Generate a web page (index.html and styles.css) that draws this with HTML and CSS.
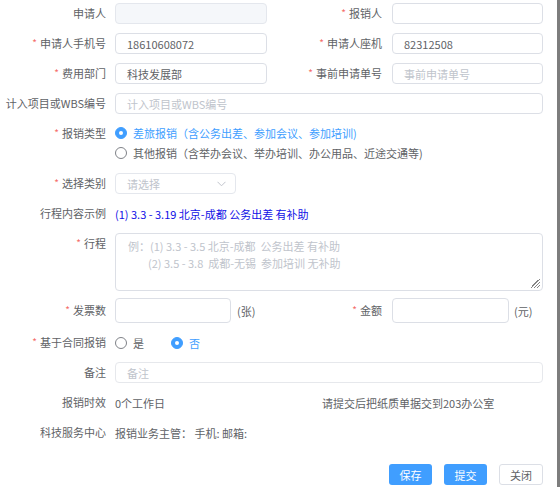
FILE: index.html
```html
<!DOCTYPE html>
<html lang="zh">
<head>
<meta charset="utf-8">
<link rel="stylesheet" href="styles.css">
</head>
<body>
<div class="page">
  <div class="form">
    <div class="row r1">
      <div class="item left"><div class="lbl">申请人</div><div class="inp disabled"></div></div>
      <div class="item right"><div class="lbl"><span class="star">*</span>报销人</div><div class="inp"></div></div>
    </div>
    <div class="row">
      <div class="item left"><div class="lbl"><span class="star">*</span>申请人手机号</div><div class="inp"><span class="val">18610608072</span></div></div>
      <div class="item right"><div class="lbl"><span class="star">*</span>申请人座机</div><div class="inp"><span class="val">82312508</span></div></div>
    </div>
    <div class="row">
      <div class="item left"><div class="lbl"><span class="star">*</span>费用部门</div><div class="inp"><span class="val">科技发展部</span></div></div>
      <div class="item right"><div class="lbl"><span class="star">*</span>事前申请单号</div><div class="inp"><span class="ph">事前申请单号</span></div></div>
    </div>
    <div class="row">
      <div class="item full"><div class="lbl">计入项目或WBS编号</div><div class="inp wide"><span class="ph">计入项目或WBS编号</span></div></div>
    </div>
    <div class="row r5">
      <div class="item full top"><div class="lbl l5"><span class="star">*</span>报销类型</div>
        <div class="radios">
          <div class="radio on"><span class="dot"></span><span>差旅报销（含公务出差、参加会议、参加培训)</span></div>
          <div class="radio"><span class="dot"></span><span>其他报销（含举办会议、举办培训、办公用品、近途交通等)</span></div>
        </div>
      </div>
    </div>
    <div class="row r6">
      <div class="item full"><div class="lbl"><span class="star">*</span>选择类别</div>
        <div class="inp select"><span class="ph">请选择</span>
          <svg class="chev" width="9" height="6" viewBox="0 0 9 6"><path d="M0.5 0.8 L4.5 4.8 L8.5 0.8" fill="none" stroke="#c0c4cc" stroke-width="1"/></svg>
        </div>
      </div>
    </div>
    <div class="row">
      <div class="item full"><div class="lbl">行程内容示例</div><div class="example">(1) 3.3 - 3.19 北京-成都 公务出差 有补助</div></div>
    </div>
    <div class="row r8">
      <div class="item full top"><div class="lbl l8"><span class="star">*</span>行程</div>
        <div class="inp area">
          <div class="ph">例：(1) 3.3 - 3.5 北京-成都&nbsp;&nbsp;公务出差 有补助</div>
          <div class="ph indent">(2) 3.5 - 3.8&nbsp;&nbsp;成都-无锡&nbsp;&nbsp;参加培训 无补助</div>
          <svg class="grip" width="12" height="12" viewBox="0 0 12 12">
            <path d="M11 2 L2 11 M11 5 L5 11 M11 8 L8 11 M9 3 L3 9" stroke="#666" stroke-width="0.8"/>
          </svg>
        </div>
      </div>
    </div>
    <div class="row r9">
      <div class="item left"><div class="lbl"><span class="star">*</span>发票数</div><div class="inp num"></div><span class="unit">(张)</span></div>
      <div class="item right"><div class="lbl"><span class="star">*</span>金额</div><div class="inp num2"></div><span class="unit">(元)</span></div>
    </div>
    <div class="row r10">
      <div class="item full"><div class="lbl"><span class="star">*</span>基于合同报销</div>
        <div class="radio inline"><span class="dot"></span><span>是</span></div>
        <div class="radio on inline"><span class="dot"></span><span>否</span></div>
      </div>
    </div>
    <div class="row">
      <div class="item full"><div class="lbl">备注</div><div class="inp wide faint"><span class="ph">备注</span></div></div>
    </div>
    <div class="row">
      <div class="item left"><div class="lbl">报销时效</div><div class="text">0个工作日</div></div>
      <div class="item notice">请提交后把纸质单据交到203办公室</div>
    </div>
    <div class="row">
      <div class="item full"><div class="lbl">科技服务中心</div><div class="text">报销业务主管：&nbsp;手机:&nbsp;邮箱:</div></div>
    </div>
    <div class="buttons">
      <div class="btn primary">保存</div>
      <div class="btn primary">提交</div>
      <div class="btn plain">关闭</div>
    </div>
  </div>
  <div class="scrollbar"></div>
</div>
</body>
</html>
```
FILE: styles.css
```css
* { box-sizing: border-box; }
html, body { margin: 0; padding: 0; background: #fff; }
body {
  font-family: "Noto Sans CJK SC", "Liberation Sans", sans-serif;
  font-size: 11px;
  color: #606266;
  width: 560px;
  height: 487px;
  overflow: hidden;
}
.page { display: flex; height: 487px; }
.form {
  width: 557px;
  display: flex;
  flex-direction: column;
  gap: 9px;
  padding-top: 3px;
}
.scrollbar { width: 3px; background: #7d7d7d; height: 100%; }
.row { display: flex; align-items: center; min-height: 21px; }
.item { display: flex; align-items: center; }
.item.top { align-items: flex-start; }
.left { width: 280px; }
.lbl {
  width: 115px;
  padding-right: 9px;
  text-align: right;
  white-space: nowrap;
  color: #606266;
  line-height: 21px;
}
.right .lbl { width: 112px; padding-right: 10px; }
.star { color: #f56c6c; margin-right: 3px; font-size: 10px; position: relative; top: -1px; }
.inp {
  width: 152px;
  height: 21px;
  border: 1px solid #dcdfe6;
  border-radius: 4px;
  background: #fff;
  display: flex;
  align-items: center;
  padding-left: 11px;
  white-space: nowrap;
  position: relative;
}
.right .inp { width: 151px; }
.inp.disabled { background: #f5f7fa; border-color: #e4e7ed; }
.inp.wide { width: 428px; }
.inp.faint { border-color: #e6e8ec; }
.val { color: #606266; }
.ph { color: #c0c4cc; }
.r5 { margin-top: 0; }
.l5 { line-height: 20px; }
.radios { display: flex; flex-direction: column; }
.radio { display: flex; align-items: center; height: 20px; color: #606266; white-space: nowrap; }
.radio .dot {
  width: 12px; height: 12px;
  border: 1px solid #7f8288;
  border-radius: 50%;
  margin-right: 6px;
  background: #fff;
  position: relative;
}
.radio.on { color: #409eff; }
.radio.on .dot { border-color: #409eff; background: #409eff; }
.radio.on .dot::after {
  content: "";
  position: absolute;
  left: 3px; top: 3px;
  width: 4px; height: 4px;
  border-radius: 50%;
  background: #fff;
}
.radio.inline { margin-right: 27px; }
.r6 { margin-top: 1px; }
.inp.select { width: 121px; border-color: #e4e7ed; }
.chev { position: absolute; right: 9px; top: 7px; }
.example { color: #1010e6; white-space: nowrap; }
.inp.area {
  width: 428px;
  height: 58px;
  display: block;
  padding-top: 4px;
  padding-left: 12px;
  line-height: 17px;
}
.indent { padding-left: 20px; }
.l8 { line-height: 21px; }
.grip { position: absolute; right: 1px; bottom: 1px; }
.r9 { margin-top: -2px; }
.inp.num { width: 116px; height: 25px; }
.inp.num2 { width: 117px; height: 25px; }
.unit { margin-left: 6px; color: #606266; }
.right .unit { margin-left: 5px; }
.r10 { min-height: 20px; }
.text { white-space: nowrap; }
.notice { margin-left: 42px; white-space: nowrap; }
.buttons {
  display: flex;
  justify-content: flex-end;
  gap: 12px;
  padding-right: 14px;
  margin-top: 12px;
}
.btn {
  width: 43px;
  height: 21px;
  border-radius: 3px;
  display: flex;
  align-items: center;
  justify-content: center;
}
.btn.primary { background: #409eff; color: #fff; }
.btn.plain { width: 44px; border: 1px solid #dcdfe6; color: #606266; background: #fff; }
```
